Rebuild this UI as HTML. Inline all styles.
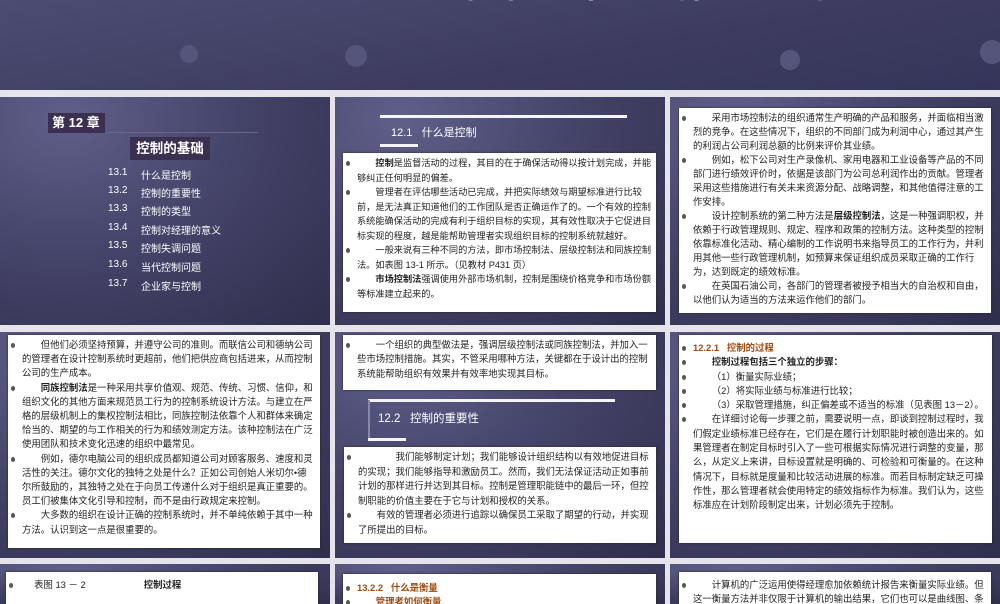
<!DOCTYPE html>
<html><head><meta charset="utf-8"><style>
*{margin:0;padding:0;box-sizing:border-box}
body{width:1000px;height:600px;overflow:hidden;background:#e4e4ea;position:relative;font-family:"Liberation Sans","Noto Sans CJK SC",sans-serif}
.p{position:absolute;background:radial-gradient(ellipse at 20% 10%,#5f5f8a 0%,#45446a 45%,#2f2e4c 100%);overflow:hidden}
.w{position:absolute;background:#fff;color:#222;font-size:9.4px;line-height:14.3px;padding:3px 5px 3px 14px;box-shadow:0 0 2px #222;overflow:hidden}
.w p{position:relative;text-indent:2em}
.w p:before{content:"";position:absolute;left:-11px;top:5px;width:4px;height:5px;border-radius:50%;background:#555;text-indent:0}
.w b{font-weight:bold}
.ln{position:absolute;background:#f4f4f8}
.h{position:absolute;color:#fff;font-size:11px}
.o{color:#a04a10;font-weight:bold}
.list div{position:absolute;left:108px;color:#fff;font-size:10px}
.list span{position:absolute;left:33px;white-space:nowrap}
</style></head><body>
<div class="p" style="left:0;top:0;width:1000px;height:90px;background:linear-gradient(170deg,#4c4b72,#3d3c60 60%,#35345a)">
<div style="position:absolute;left:455px;top:-39px;color:#fff;font-weight:bold;font-size:32px;letter-spacing:8px">第十二章 控制的基础</div>
<div style="position:absolute;left:180px;top:45px;width:18px;height:18px;border-radius:50%;background:#55547a"></div>
<div style="position:absolute;left:345px;top:45px;width:22px;height:22px;border-radius:50%;background:#55547a"></div>
<div style="position:absolute;left:780px;top:50px;width:20px;height:20px;border-radius:50%;background:#55547a"></div>
<div style="position:absolute;left:980px;top:40px;width:24px;height:24px;border-radius:50%;background:#55547a"></div>
</div>

<div class="p" style="left:0;top:97px;width:330px;height:228px">
<div style="position:absolute;left:48px;top:16px;width:57px;height:20px;background:#3b3050;color:#fff;font-weight:bold;font-size:13px;line-height:20px;padding-left:4px">第 12 章</div>
<div style="position:absolute;left:105px;top:35px;width:153px;height:1px;background:#6a6688"></div>
<div style="position:absolute;left:130px;top:40px;width:80px;height:23px;background:#3b3050;color:#fff;font-weight:bold;font-size:13.5px;line-height:23px;text-align:center">控制的基础</div>
<div class="list">
<div style="top:70px">13.1<span>什么是控制</span></div>
<div style="top:88px">13.2<span>控制的重要性</span></div>
<div style="top:106px">13.3<span>控制的类型</span></div>
<div style="top:125px">13.4<span>控制对经理的意义</span></div>
<div style="top:143px">13.5<span>控制失调问题</span></div>
<div style="top:162px">13.6<span>当代控制问题</span></div>
<div style="top:181px">13.7<span>企业家与控制</span></div>
</div></div>

<div class="p" style="left:335px;top:97px;width:330px;height:228px">
<div class="ln" style="left:45px;top:18px;width:247px;height:3px"></div>
<div class="h" style="left:56px;top:27px">12.1&nbsp;&nbsp;&nbsp;什么是控制</div>
<div class="ln" style="left:45px;top:47px;width:38px;height:3px"></div>
<div class="w" style="left:8px;top:56px;width:313px;height:159px;line-height:14.5px;font-size:9.2px">
<p><b>控制</b>是监督活动的过程，其目的在于确保活动得以按计划完成，并能够纠正任何明显的偏差。</p>
<p>管理者在评估哪些活动已完成，并把实际绩效与期望标准进行比较前，是无法真正知道他们的工作团队是否正确运作了的。一个有效的控制系统能确保活动的完成有利于组织目标的实现，其有效性取决于它促进目标实现的程度，越是能帮助管理者实现组织目标的控制系统就越好。</p>
<p>一般来说有三种不同的方法，即市场控制法、层级控制法和同族控制法。如表图 13-1 所示。（见教材 P431 页）</p>
<p><b>市场控制法</b>强调使用外部市场机制，控制是围绕价格竞争和市场份额等标准建立起来的。</p>
</div></div>

<div class="p" style="left:670px;top:97px;width:330px;height:228px">
<div class="w" style="left:9px;top:11px;width:312px;height:205px;line-height:14px">
<p>采用市场控制法的组织通常生产明确的产品和服务，并面临相当激烈的竞争。在这些情况下，组织的不同部门成为利润中心，通过其产生的利润占公司利润总额的比例来评价其业绩。</p>
<p>例如，松下公司对生产录像机、家用电器和工业设备等产品的不同部门进行绩效评价时，依据是该部门为公司总利润作出的贡献。管理者采用这些措施进行有关未来资源分配、战略调整，和其他值得注意的工作安排。</p>
<p>设计控制系统的第二种方法是<b>层级控制法</b>，这是一种强调职权，并依赖于行政管理规则、规定、程序和政策的控制方法。这种类型的控制依靠标准化活动、精心编制的工作说明书来指导员工的工作行为，并利用其他一些行政管理机制，如预算来保证组织成员采取正确的工作行为，达到既定的绩效标准。</p>
<p>在英国石油公司，各部门的管理者被授予相当大的自治权和自由，以他们认为适当的方法来运作他们的部门。</p>
</div></div>

<div class="p" style="left:0;top:332px;width:330px;height:226px">
<div class="w" style="left:8px;top:3px;width:312px;height:213px;line-height:14.2px">
<p>但他们必须坚持预算，并遵守公司的准则。而联信公司和德纳公司的管理者在设计控制系统时更超前，他们把供应商包括进来，从而控制公司的生产成本。</p>
<p><b>同族控制法</b>是一种采用共享价值观、规范、传统、习惯、信仰，和组织文化的其他方面来规范员工行为的控制系统设计方法。与建立在严格的层级机制上的集权控制法相比，同族控制法依靠个人和群体来确定恰当的、期望的与工作相关的行为和绩效测定方法。该种控制法在广泛使用团队和技术变化迅速的组织中最常见。</p>
<p>例如，德尔电脑公司的组织成员都知道公司对顾客服务、速度和灵活性的关注。德尔文化的独特之处是什么？正如公司创始人米切尔•德尔所鼓励的，其独特之处在于向员工传递什么对于组织是真正重要的。员工们被集体文化引导和控制，而不是由行政规定来控制。</p>
<p>大多数的组织在设计正确的控制系统时，并不单纯依赖于其中一种方法。认识到这一点是很重要的。</p>
</div></div>

<div class="p" style="left:335px;top:332px;width:330px;height:226px">
<div class="w" style="left:8px;top:3px;width:313px;height:55px">
<p>一个组织的典型做法是，强调层级控制法或同族控制法，并加入一些市场控制措施。其实，不管采用哪种方法，关键都在于设计出的控制系统能帮助组织有效果并有效率地实现其目标。</p>
</div>
<div class="ln" style="left:33px;top:67px;width:247px;height:3px"></div>
<div class="ln" style="left:33px;top:68px;width:2px;height:40px;background:#8a88a8"></div>
<div class="h" style="left:43px;top:78px;font-size:11.5px">12.2&nbsp;&nbsp;&nbsp;控制的重要性</div>
<div class="ln" style="left:33px;top:106px;width:38px;height:3px"></div>
<div class="w" style="left:9px;top:115px;width:312px;height:96px;line-height:14.6px">
<p style="text-indent:4em">我们能够制定计划；我们能够设计组织结构以有效地促进目标的实现；我们能够指导和激励员工。然而，我们无法保证活动正如事前计划的那样进行并达到其目标。控制是管理职能链中的最后一环，但控制职能的价值主要在于它与计划和授权的关系。</p>
<p>有效的管理者必须进行追踪以确保员工采取了期望的行动，并实现了所提出的目标。</p>
</div></div>

<div class="p" style="left:670px;top:332px;width:330px;height:226px">
<div class="w" style="left:9px;top:3px;width:313px;height:208px;line-height:14.3px;padding-top:6px">
<p style="text-indent:0"><span class="o">12.2.1&nbsp;&nbsp;&nbsp;控制的过程</span></p>
<p><b>控制过程包括三个独立的步骤：</b></p>
<p>（1）衡量实际业绩；</p>
<p>（2）将实际业绩与标准进行比较；</p>
<p style="white-space:nowrap">（3）采取管理措施，纠正偏差或不适当的标准（见表图 13－2）。</p>
<p>在详细讨论每一步骤之前，需要说明一点，即谈到控制过程时，我们假定业绩标准已经存在，它们是在履行计划职能时被创造出来的。如果管理者在制定目标时引入了一些可根据实际情况进行调整的变量，那么，从定义上来讲，目标设置就是明确的、可检验和可衡量的。在这种情况下，目标就是度量和比较活动进展的标准。而若目标制定缺乏可操作性，那么管理者就会使用特定的绩效指标作为标准。我们认为，这些标准应在计划阶段制定出来，计划必须先于控制。</p>
</div></div>

<div class="p" style="left:0;top:564px;width:330px;height:40px">
<div class="w" style="left:6px;top:8px;width:312px;height:40px;padding-top:6px">
<p style="text-indent:1.5em">表图 13 － 2<span style="margin-left:58px;font-weight:bold">控制过程</span></p>
</div></div>
<div class="p" style="left:335px;top:564px;width:330px;height:40px">
<div class="w" style="left:8px;top:10px;width:313px;height:40px;padding-top:7px">
<p style="text-indent:0"><span class="o">13.2.2&nbsp;&nbsp;&nbsp;什么是衡量</span></p>
<p><span class="o">管理者如何衡量</span></p>
</div></div>
<div class="p" style="left:670px;top:564px;width:330px;height:40px">
<div class="w" style="left:9px;top:8px;width:312px;height:40px;padding-top:6px">
<p>计算机的广泛运用使得经理愈加依赖统计报告来衡量实际业绩。但这一衡量方法并非仅限于计算机的输出结果，它们也可以是曲线图、条</p>
</div></div>
</body></html>
